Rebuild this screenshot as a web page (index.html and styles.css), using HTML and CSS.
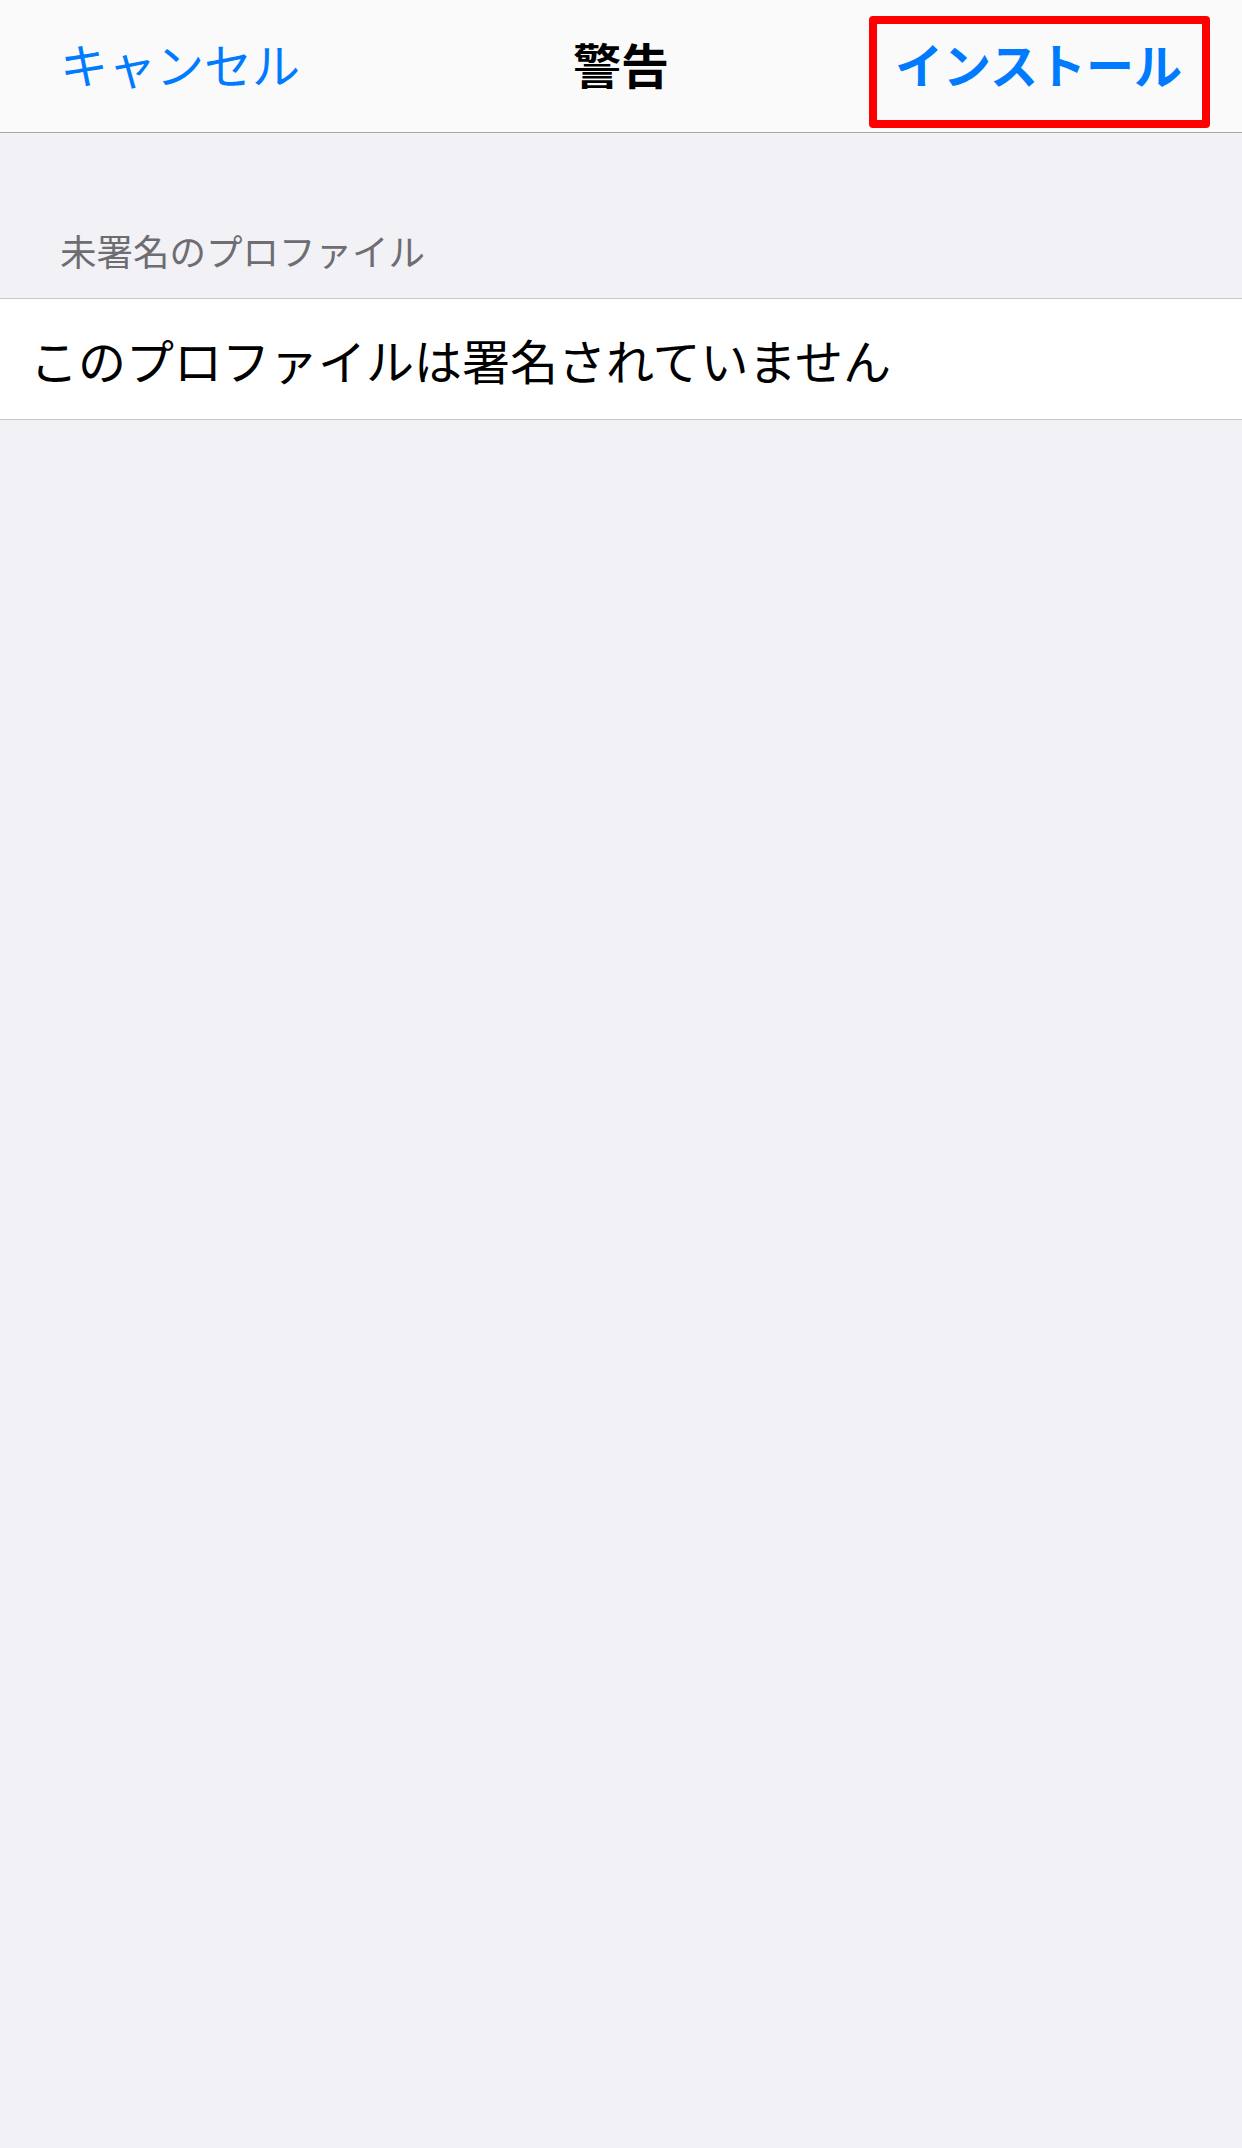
FILE: index.html
```html
<!DOCTYPE html>
<html lang="ja">
<head>
<meta charset="utf-8">
<title>警告</title>
<link rel="stylesheet" href="styles.css">
</head>
<body>
<header class="navbar">
  <span class="nav-btn nav-cancel">キャンセル</span>
  <span class="nav-title">警告</span>
  <span class="nav-btn nav-install">インストール</span>
</header>
<main class="content">
  <div class="section-header">未署名のプロファイル</div>
  <div class="cell-group">
    <div class="cell">このプロファイルは署名されていません</div>
  </div>
</main>
</body>
</html>
```
FILE: styles.css
```css
* { box-sizing: border-box; margin: 0; padding: 0; }
html, body {
  width: 1242px;
  height: 2148px;
  background: #f2f1f6;
  font-family: "Noto Sans CJK JP", "Noto Sans", sans-serif;
}
body { overflow: hidden; }
.navbar {
  height: 133px;
  background: #fafafa;
  border-bottom: 1px solid #a7a7ab;
  display: grid;
  grid-template-columns: 1fr auto 1fr;
  align-items: center;
  padding: 0 60px 6px 60px;
}
.nav-btn {
  font-size: 48px;
  color: #007aff;
  line-height: 1;
}
.nav-cancel { justify-self: start; }
.nav-title {
  font-size: 48px;
  font-weight: 700;
  color: #000;
  line-height: 1;
}
.nav-install {
  justify-self: end;
  font-weight: 700;
  position: relative;
}
.nav-install::after {
  content: "";
  position: absolute;
  left: -26px;
  right: -28px;
  top: -23px;
  bottom: -41px;
  border: 8px solid #ff0000;
  border-radius: 4px;
}
.section-header {
  height: 165px;
  display: flex;
  align-items: flex-end;
  padding: 0 0 29px 60px;
  font-size: 36.5px;
  color: #6d6d72;
  line-height: 1;
}
.cell-group {
  background: #fff;
  border-top: 1px solid #c8c7cc;
  border-bottom: 1px solid #c8c7cc;
}
.cell {
  height: 120px;
  display: flex;
  align-items: center;
  padding-left: 30px;
  font-size: 48px;
  color: #000;
  line-height: 1;
}
```
